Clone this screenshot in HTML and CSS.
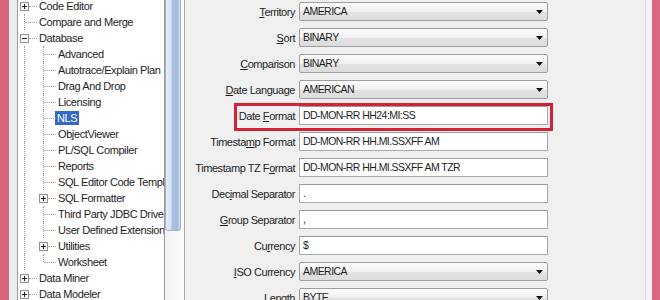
FILE: index.html
```html
<!DOCTYPE html>
<html>
  <head>
    <title>Preferences - NLS</title>
    <link rel="stylesheet" href="styles.css">
  </head>
  <body>
    <div class="window">

      <div class="edge-pink"></div>
      <div class="edge-light"></div>

      <div class="tree">
        <div class="row"><span class="cell node plus"></span><span class="label">Code Editor</span></div>
        <div class="row"><span class="cell node"></span><span class="label">Compare and Merge</span></div>
        <div class="row"><span class="cell node minus"></span><span class="label">Database</span></div>
        <div class="row"><span class="cell guide"></span><span class="cell node"></span><span class="label">Advanced</span></div>
        <div class="row"><span class="cell guide"></span><span class="cell node"></span><span class="label">Autotrace/Explain Plan</span></div>
        <div class="row"><span class="cell guide"></span><span class="cell node"></span><span class="label">Drag And Drop</span></div>
        <div class="row"><span class="cell guide"></span><span class="cell node"></span><span class="label">Licensing</span></div>
        <div class="row"><span class="cell guide"></span><span class="cell node"></span><span class="label selected">NLS</span></div>
        <div class="row"><span class="cell guide"></span><span class="cell node"></span><span class="label">ObjectViewer</span></div>
        <div class="row"><span class="cell guide"></span><span class="cell node"></span><span class="label">PL/SQL Compiler</span></div>
        <div class="row"><span class="cell guide"></span><span class="cell node"></span><span class="label">Reports</span></div>
        <div class="row"><span class="cell guide"></span><span class="cell node"></span><span class="label">SQL Editor Code Templates</span></div>
        <div class="row"><span class="cell guide"></span><span class="cell node plus"></span><span class="label">SQL Formatter</span></div>
        <div class="row"><span class="cell guide"></span><span class="cell node"></span><span class="label">Third Party JDBC Drivers</span></div>
        <div class="row"><span class="cell guide"></span><span class="cell node"></span><span class="label">User Defined Extensions</span></div>
        <div class="row"><span class="cell guide"></span><span class="cell node plus"></span><span class="label">Utilities</span></div>
        <div class="row"><span class="cell guide"></span><span class="cell node last"></span><span class="label">Worksheet</span></div>
        <div class="row"><span class="cell node plus"></span><span class="label">Data Miner</span></div>
        <div class="row"><span class="cell node plus"></span><span class="label">Data Modeler</span></div>
      </div>

      <div class="scrollbar">
        <div class="thumb"></div>
      </div>

      <div class="panel">
        <div class="form-row">
          <label><u>T</u>erritory</label>
          <div class="combo">AMERICA</div>
        </div>
        <div class="form-row">
          <label><u>S</u>ort</label>
          <div class="combo">BINARY</div>
        </div>
        <div class="form-row">
          <label><u>C</u>omparison</label>
          <div class="combo">BINARY</div>
        </div>
        <div class="form-row">
          <label><u>D</u>ate Language</label>
          <div class="combo">AMERICAN</div>
        </div>
        <div class="form-row highlight">
          <label>Date <u>F</u>ormat</label>
          <div class="field">DD-MON-RR HH24:MI:SS</div>
        </div>
        <div class="form-row">
          <label>Timesta<u>m</u>p Format</label>
          <div class="field">DD-MON-RR HH.MI.SSXFF AM</div>
        </div>
        <div class="form-row">
          <label>Timestamp TZ F<u>o</u>rmat</label>
          <div class="field">DD-MON-RR HH.MI.SSXFF AM TZR</div>
        </div>
        <div class="form-row">
          <label>Dec<u>i</u>mal Separator</label>
          <div class="field">.</div>
        </div>
        <div class="form-row">
          <label><u>G</u>roup Separator</label>
          <div class="field">,</div>
        </div>
        <div class="form-row">
          <label>Cu<u>r</u>rency</label>
          <div class="field">$</div>
        </div>
        <div class="form-row">
          <label><u>I</u>SO Currency</label>
          <div class="combo">AMERICA</div>
        </div>
        <div class="form-row">
          <label>Length</label>
          <div class="combo">BYTE</div>
        </div>
      </div>

      <div class="edge-right-line"></div>
      <div class="edge-pink right"></div>

    </div>
  </body>
</html>
```

FILE: styles.css
```css
body {
    margin: 0;
    padding: 0;
    font-family: "Liberation Sans", Arial, sans-serif;
    font-size: 11px;
    color: #1e1e1e;
    background-color: #f0f0f0;
}

.window {
    display: flex;
    flex-direction: row;
    width: 660px;
    height: 300px;
    overflow: hidden;
}

/* window frame edges */

.edge-pink {
    width: 9px;
    flex-shrink: 0;
    background-color: #d9627d;
}

.edge-pink.right {
    width: 8px;
    background-color: #dc6780;
}

.edge-light {
    width: 8px;
    flex-shrink: 0;
    background-color: #e6eeee;
}

.edge-right-line {
    width: 6px;
    flex-shrink: 0;
    border-left: 1px solid #dedede;
    background-color: #f6f3f4;
}

/* tree */

.tree {
    width: 145px;
    flex-shrink: 0;
    background-color: white;
    border-left: 1px solid #9c9c9c;
    padding-left: 1px;
    margin-top: -2px;
    overflow: hidden;
    letter-spacing: -0.4px;
}

.row {
    display: flex;
    flex-direction: row;
    align-items: center;
    height: 16px;
    white-space: nowrap;
}

.cell {
    position: relative;
    width: 19px;
    height: 16px;
    flex-shrink: 0;
}

.cell::before {
    content: "";
    position: absolute;
    left: 5px;
    top: 0;
    bottom: 0;
    border-left: 1px dotted #a3a3a3;
}

.node.last::before {
    bottom: 8px;
}

.node::after {
    content: "";
    position: absolute;
    left: 6px;
    right: 1px;
    top: 8px;
    border-top: 1px dotted #a3a3a3;
}

.plus::after,
.minus::after {
    left: 10px;
}

.plus,
.minus {
    background-repeat: no-repeat;
    background-position: 1px 4px;
}

.plus {
    background-image: url("data:image/svg+xml;utf8,<svg xmlns='http://www.w3.org/2000/svg' width='9' height='9'><rect x='0.5' y='0.5' width='8' height='8' fill='%23f4f4f4' stroke='%23929292'/><path d='M2 4.5h5M4.5 2v5' stroke='%23222' stroke-width='1'/></svg>");
}

.minus {
    background-image: url("data:image/svg+xml;utf8,<svg xmlns='http://www.w3.org/2000/svg' width='9' height='9'><rect x='0.5' y='0.5' width='8' height='8' fill='%23f4f4f4' stroke='%23929292'/><path d='M2 4.5h5' stroke='%23222' stroke-width='1'/></svg>");
}

.plus::before,
.minus::before {
    content: none;
}

.label {
    padding: 0 1px;
    line-height: 14px;
}

.selected {
    background-color: #3468c8;
    color: white;
    margin-left: -2px;
    padding: 0 2px;
}

/* scrollbar */

.scrollbar {
    width: 19px;
    flex-shrink: 0;
    background: linear-gradient(to right, #f2f2f2, #fbfbfb);
    border-left: 1px solid #9c9c9c;
    border-right: 1px solid #a8a8a8;
}

.thumb {
    width: 14px;
    height: 232px;
    margin-top: -3px;
    border: 1px solid #9fb3cf;
    border-radius: 0 0 3px 3px;
    background: linear-gradient(to right, #e7edf7 0%, #d6e1f1 35%, #a9c1e2 45%, #a3bcdf 85%, #dbe5f3 100%);
}

/* form panel */

.panel {
    flex: 1;
    display: flex;
    flex-direction: column;
    padding-top: 2px;
    padding-left: 1px;
    background-color: #f0f0f0;
}

.form-row {
    position: relative;
    display: flex;
    flex-direction: row;
    align-items: center;
    height: 19px;
    margin-bottom: 7px;
    flex-shrink: 0;
}

.form-row > label {
    width: 109px;
    text-align: right;
    margin-right: 4px;
    white-space: nowrap;
    letter-spacing: -0.45px;
}

.form-row > label u {
    text-decoration-thickness: 1px;
    text-underline-offset: 1px;
}

.combo,
.field {
    box-sizing: border-box;
    width: 249px;
    height: 19px;
    line-height: 17px;
    padding: 0 3px;
    white-space: nowrap;
    font-size: 10.5px;
    letter-spacing: -0.55px;
}

.combo {
    border: 1px solid #9e9e9e;
    border-radius: 2px;
    background-color: #ececec;
    background-image:
        url("data:image/svg+xml;utf8,<svg xmlns='http://www.w3.org/2000/svg' width='7' height='4'><path d='M0 0h7L3.5 4z' fill='%23111'/></svg>"),
        linear-gradient(#fbfbfb, #f0f0f0 50%, #e3e3e3 51%, #dcdcdc);
    background-repeat: no-repeat;
    background-position: right 4px center, 0 0;
}

.field {
    border: 1px solid #a9a9a9;
    border-top-color: #9a9a9a;
    background-color: white;
}

.highlight::after {
    content: "";
    position: absolute;
    left: 48px;
    top: -3px;
    width: 313px;
    height: 22px;
    border: 3px solid #d22233;
}
```
